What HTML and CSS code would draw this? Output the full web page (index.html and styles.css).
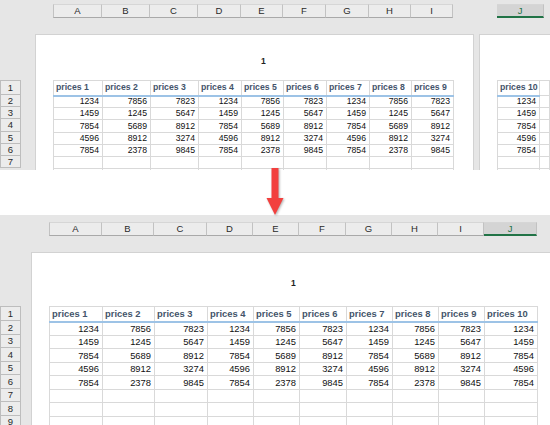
FILE: index.html
```html
<!DOCTYPE html>
<html>
<head>
<meta charset="utf-8">
<link rel="stylesheet" href="styles.css">
</head>
<body>
<div class="panel panel-top">
  <div class="colhead colhead-top">
    <div class="ch">A</div><div class="ch">B</div><div class="ch">C</div><div class="ch">D</div><div class="ch">E</div><div class="ch">F</div><div class="ch">G</div><div class="ch">H</div><div class="ch">I</div><div class="ch-gap"></div><div class="ch ch-sel">J</div>
  </div>
  <div class="body body-top">
    <div class="rowheads rowheads-top">
      <div class="rh rh-1">1</div><div class="rh">2</div><div class="rh">3</div><div class="rh">4</div><div class="rh">5</div><div class="rh">6</div><div class="rh">7</div>
    </div>
    <div class="page page-top1">
      <div class="pagenum pagenum-top">1</div>
      <table class="grid grid-top">
        <colgroup><col class="w49"><col class="w48"><col class="w48"><col class="w43"><col class="w42"><col class="w43"><col class="w43"><col class="w42"><col class="w42"></colgroup>
        <tr class="hd"><th>prices 1</th><th>prices 2</th><th>prices 3</th><th>prices 4</th><th>prices 5</th><th>prices 6</th><th>prices 7</th><th>prices 8</th><th>prices 9</th></tr>
        <tr><td>1234</td><td>7856</td><td>7823</td><td>1234</td><td>7856</td><td>7823</td><td>1234</td><td>7856</td><td>7823</td></tr>
        <tr><td>1459</td><td>1245</td><td>5647</td><td>1459</td><td>1245</td><td>5647</td><td>1459</td><td>1245</td><td>5647</td></tr>
        <tr><td>7854</td><td>5689</td><td>8912</td><td>7854</td><td>5689</td><td>8912</td><td>7854</td><td>5689</td><td>8912</td></tr>
        <tr><td>4596</td><td>8912</td><td>3274</td><td>4596</td><td>8912</td><td>3274</td><td>4596</td><td>8912</td><td>3274</td></tr>
        <tr><td>7854</td><td>2378</td><td>9845</td><td>7854</td><td>2378</td><td>9845</td><td>7854</td><td>2378</td><td>9845</td></tr>
        <tr><td></td><td></td><td></td><td></td><td></td><td></td><td></td><td></td><td></td></tr>
        <tr><td></td><td></td><td></td><td></td><td></td><td></td><td></td><td></td><td></td></tr>
      </table>
    </div>
    <div class="page page-top2">
      <table class="grid grid-top grid-j">
        <colgroup><col class="w47"><col class="w30"></colgroup>
        <tr class="hd"><th>prices 10</th><td class="blank"></td></tr>
        <tr><td>1234</td><td></td></tr>
        <tr><td>1459</td><td></td></tr>
        <tr><td>7854</td><td></td></tr>
        <tr><td>4596</td><td></td></tr>
        <tr><td>7854</td><td></td></tr>
        <tr><td></td><td></td></tr>
        <tr><td></td><td></td></tr>
      </table>
    </div>
  </div>
</div>

<div class="arrow-band">
  <svg class="arrow" viewBox="0 0 20 48" width="20" height="48">
    <path d="M6.5 0H13.5V30H18.5L10 47L1.5 30H6.5Z" fill="#f2403e"/>
  </svg>
</div>

<div class="panel panel-bottom">
  <div class="colhead colhead-bottom">
    <div class="ch">A</div><div class="ch">B</div><div class="ch">C</div><div class="ch">D</div><div class="ch">E</div><div class="ch">F</div><div class="ch">G</div><div class="ch">H</div><div class="ch">I</div><div class="ch ch-sel">J</div>
  </div>
  <div class="body body-bottom">
    <div class="rowheads rowheads-bottom">
      <div class="rh rh-1">1</div><div class="rh">2</div><div class="rh">3</div><div class="rh">4</div><div class="rh">5</div><div class="rh">6</div><div class="rh">7</div><div class="rh">8</div><div class="rh">9</div>
    </div>
    <div class="page page-bottom">
      <div class="pagenum pagenum-bottom">1</div>
      <table class="grid grid-bottom">
        <colgroup><col class="w53"><col class="w52"><col class="w53"><col class="w46"><col class="w46"><col class="w47"><col class="w46"><col class="w46"><col class="w46"><col class="w53"></colgroup>
        <tr class="hd"><th>prices 1</th><th>prices 2</th><th>prices 3</th><th>prices 4</th><th>prices 5</th><th>prices 6</th><th>prices 7</th><th>prices 8</th><th>prices 9</th><th>prices 10</th></tr>
        <tr><td>1234</td><td>7856</td><td>7823</td><td>1234</td><td>7856</td><td>7823</td><td>1234</td><td>7856</td><td>7823</td><td>1234</td></tr>
        <tr><td>1459</td><td>1245</td><td>5647</td><td>1459</td><td>1245</td><td>5647</td><td>1459</td><td>1245</td><td>5647</td><td>1459</td></tr>
        <tr><td>7854</td><td>5689</td><td>8912</td><td>7854</td><td>5689</td><td>8912</td><td>7854</td><td>5689</td><td>8912</td><td>7854</td></tr>
        <tr><td>4596</td><td>8912</td><td>3274</td><td>4596</td><td>8912</td><td>3274</td><td>4596</td><td>8912</td><td>3274</td><td>4596</td></tr>
        <tr><td>7854</td><td>2378</td><td>9845</td><td>7854</td><td>2378</td><td>9845</td><td>7854</td><td>2378</td><td>9845</td><td>7854</td></tr>
        <tr><td></td><td></td><td></td><td></td><td></td><td></td><td></td><td></td><td></td><td></td></tr>
        <tr><td></td><td></td><td></td><td></td><td></td><td></td><td></td><td></td><td></td><td></td></tr>
        <tr><td></td><td></td><td></td><td></td><td></td><td></td><td></td><td></td><td></td><td></td></tr>
      </table>
    </div>
  </div>
</div>
</body>
</html>
```

FILE: styles.css
```css
* { box-sizing: border-box; }

html, body {
  margin: 0;
  padding: 0;
}

body {
  width: 550px;
  height: 425px;
  overflow: hidden;
  background: #ffffff;
  font-family: "Liberation Sans", Arial, sans-serif;
}

.panel {
  background: #e6e6e6;
  overflow: hidden;
  display: flex;
  flex-direction: column;
}

.panel-top { height: 170px; }
.panel-bottom { height: 210px; }

/* column headers */
.colhead {
  display: grid;
  height: 14px;
  flex: none;
}

.colhead-top {
  margin: 4px 0 0 53px;
  grid-template-columns: 49px 48px 48px 43px 42px 43px 43px 42px 42px 44px 47px;
}

.colhead-bottom {
  margin: 7px 0 0 49px;
  grid-template-columns: 53px 52px 53px 46px 46px 47px 46px 46px 46px 53px;
}

.ch {
  background: #ececec;
  border-top: 1px solid #d6d6d6;
  border-right: 1px solid #c2c2c2;
  border-bottom: 1px solid #a9a9a9;
  font-size: 9.5px;
  line-height: 12px;
  color: #2a2a2a;
  text-align: center;
}

.ch:first-child { border-left: 1px solid #c2c2c2; }

.ch-sel {
  background: #d4d4d4;
  border-bottom: 2px solid #217346;
  color: #217346;
  line-height: 11px;
}

/* body area */
.body {
  display: flex;
  flex: 1;
  margin-top: 17px;
  min-height: 0;
}

.rowheads {
  width: 21px;
  flex: none;
}

.rowheads-top { padding-top: 45px; margin-right: 15px; }
.rowheads-bottom { padding-top: 53px; margin-right: 11px; }

.rh {
  background: #ececec;
  border: 1px solid #bdbdbd;
  border-top: none;
  font-size: 9.5px;
  color: #2a2a2a;
  text-align: center;
  display: flex;
  align-items: center;
  justify-content: center;
}

.rh-1 { border-top: 1px solid #bdbdbd; }

.rowheads-top .rh { height: 12.2px; }
.rowheads-top .rh-1 { height: 15px; }
.rowheads-bottom .rh { height: 13.5px; }
.rowheads-bottom .rh-1 { height: 15px; }

/* pages */
.page {
  background: #ffffff;
  box-shadow: 0 0 0 1px #d2d2d2;
  overflow: hidden;
}

.page-top1 {
  width: 437px;
  flex: none;
  padding: 20px 0 0 17px;
}

.page-top2 {
  flex: 1;
  margin-left: 7px;
  padding: 45px 0 0 17px;
}

.page-bottom {
  flex: 1;
  padding: 24px 0 0 17px;
}

.pagenum {
  height: 12px;
  line-height: 12px;
  font-size: 8.5px;
  font-weight: bold;
  color: #222;
}

.pagenum-top { padding-left: 208px; margin-bottom: 13px; }
.pagenum-bottom { padding-left: 242px; margin-bottom: 17px; }

/* grid tables */
.grid {
  border-collapse: collapse;
  table-layout: fixed;
}

.grid td,
.grid th {
  border: 1px solid #d9d9d9;
  white-space: nowrap;
  overflow: hidden;
  padding: 0;
  line-height: 1;
}

.grid td {
  text-align: right;
  padding-right: 3px;
  color: #111111;
}

.grid th {
  text-align: left;
  padding-left: 2px;
  font-weight: bold;
  color: #44546a;
  border-bottom: 2px solid #9dc3e6;
}

.grid td.blank { border-bottom: 1px solid #d9d9d9; }

.grid-top { font-size: 8.7px; }
.grid-top tr { height: 12.2px; }
.grid-top tr.hd { height: 15px; }

.grid-bottom { font-size: 9.4px; }
.grid-bottom tr { height: 13.5px; }
.grid-bottom tr.hd { height: 15px; }

.w30 { width: 30px; }
.w42 { width: 42px; }
.w43 { width: 43px; }
.w46 { width: 46px; }
.w47 { width: 47px; }
.w48 { width: 48px; }
.w49 { width: 49px; }
.w52 { width: 52px; }
.w53 { width: 53px; }

/* arrow */
.arrow-band {
  height: 45px;
  display: flex;
  justify-content: center;
}

.arrow {
  display: block;
  margin-top: -2px;
  margin-left: -1px;
  filter: drop-shadow(1px 1px 1px rgba(0, 0, 0, 0.3));
}
```
